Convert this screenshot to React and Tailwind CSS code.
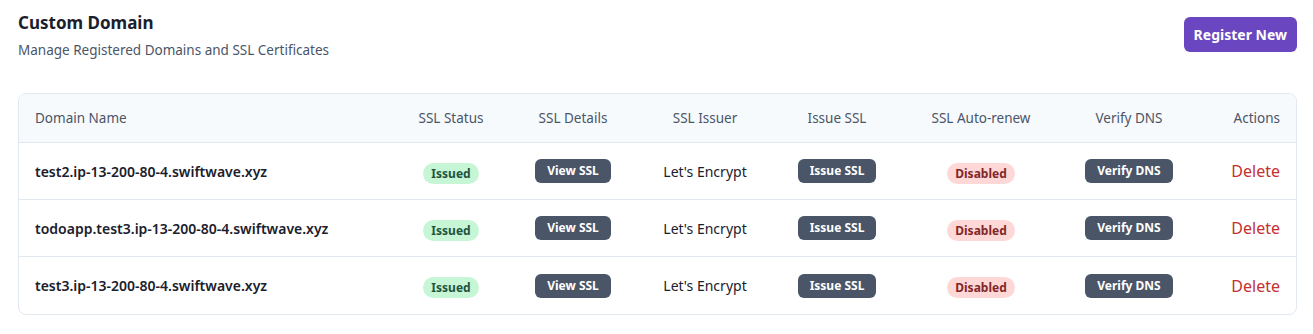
import React from "react";

const domains = [
  "test2.ip-13-200-80-4.swiftwave.xyz",
  "todoapp.test3.ip-13-200-80-4.swiftwave.xyz",
  "test3.ip-13-200-80-4.swiftwave.xyz",
];

const cols = "grid grid-cols-[371px_122px_122px_142px_122px_166px_130px_102px]";

const DarkButton = ({ children }) => (
  <button className="bg-[#4a5568] text-white text-[12px] font-bold px-3 h-6 rounded-md leading-none">
    {children}
  </button>
);

const Badge = ({ children, tone }) => (
  <span
    className={
      tone === "green"
        ? "bg-[#c6f6d5] text-[#22543d] text-[12px] font-bold px-2 py-[2px] rounded-full"
        : "bg-[#fed7d7] text-[#822727] text-[12px] font-bold px-2 py-[2px] rounded-full"
    }
  >
    {children}
  </span>
);

const App = () => {
  return (
    <div className="bg-white w-[1313px] h-[334px] pl-[18px] pr-[16px] pt-[12px] font-['Noto_Sans',sans-serif] text-[#1a202c]">
      {/* Header */}
      <div className="flex items-start justify-between">
        <div>
          <h1 className="text-[17px] font-bold leading-[22px]">Custom Domain</h1>
          <p className="text-[13.5px] text-[#4a5568] mt-[6px]">Manage Registered Domains and SSL Certificates</p>
        </div>
        <button className="mt-[5px] bg-[#6b46c1] text-white text-[14px] font-bold h-[35px] px-[10px] rounded-md">
          Register New
        </button>
      </div>

      {/* Table */}
      <div className="mt-[33px] border border-[#e2e8f0] rounded-lg overflow-hidden">
        <div className={`${cols} bg-[#f7fafc] h-[49px] items-center text-[13.5px] text-[#4a5568] border-b border-[#e2e8f0]`}>
          <div className="pl-4">Domain Name</div>
          <div className="text-center">SSL Status</div>
          <div className="text-center">SSL Details</div>
          <div className="text-center">SSL Issuer</div>
          <div className="text-center">Issue SSL</div>
          <div className="text-center">SSL Auto-renew</div>
          <div className="text-center">Verify DNS</div>
          <div className="text-right pr-4">Actions</div>
        </div>
        {domains.map((d, i) => (
          <div
            key={d}
            className={`${cols} h-[57px] items-center text-[14px] ${i < domains.length - 1 ? "border-b border-[#e2e8f0]" : ""}`}
          >
            <div className="pl-4 font-semibold">{d}</div>
            <div className="text-center pt-[2px]"><Badge tone="green">Issued</Badge></div>
            <div className="text-center"><DarkButton>View SSL</DarkButton></div>
            <div className="text-center">Let's Encrypt</div>
            <div className="text-center"><DarkButton>Issue SSL</DarkButton></div>
            <div className="text-center pt-[2px]"><Badge tone="red">Disabled</Badge></div>
            <div className="text-center"><DarkButton>Verify DNS</DarkButton></div>
            <div className="text-right pr-4 text-[16px] text-[#c53030]">Delete</div>
          </div>
        ))}
      </div>
    </div>
  );
};

export default App;
